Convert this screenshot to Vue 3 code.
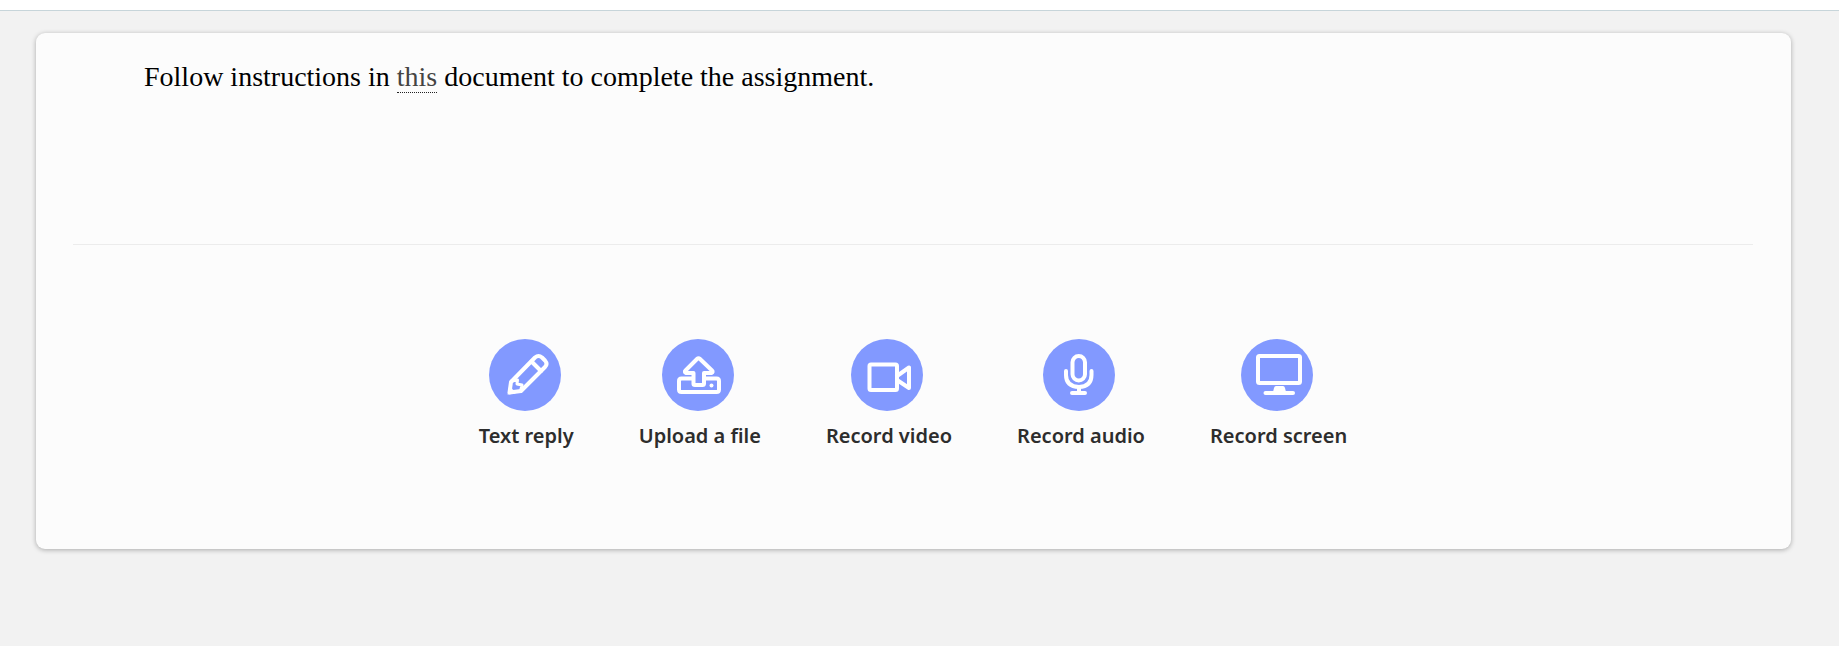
<script setup>
const actions = [
  { id: 'text', label: 'Text reply' },
  { id: 'upload', label: 'Upload a file' },
  { id: 'video', label: 'Record video' },
  { id: 'audio', label: 'Record audio' },
  { id: 'screen', label: 'Record screen' },
]
</script>

<template>
  <div class="page">
    <header class="topbar"></header>
    <main class="card">
      <section class="instructions">
        <p>Follow instructions in <a href="#">this</a> document to complete the assignment.</p>
      </section>
      <section class="actions">
        <button v-for="action in actions" :key="action.id" type="button" class="action">
          <span class="circle">
            <svg viewBox="0 0 72 72" aria-hidden="true">
              <g v-if="action.id === 'text'">
                <path d="M20.500 53.500 L22 43 L46 18.500 Q49.500 15.500 53 18.500 L56 21.500 Q59 25 56 28 L32 52 Z" />
                <path d="M42.500 22.500 L52 32" />
                <path class="thin" d="M22.500 42 L28.500 41 L28 45 L33 46 L31.500 52" />
                <path class="solid" d="M18.500 55.500 L20 48 Q25 50 26.500 54.500 Z" />
              </g>
              <g v-else-if="action.id === 'upload'">
                <path d="M31 39.500 H19.500 Q17 39.500 17 42 V50.500 Q17 53 19.500 53 H54.500 Q57 53 57 50.500 V42 Q57 39.500 54.500 39.500 H43" />
                <path d="M31.500 45 V34 H24 Q22 33 23.500 31.500 L35 20 Q36.500 18.500 38 20 L50 31.500 Q51.500 33 49.500 34 H42 V44.500 Q42 46 40.500 46 H33 Q31.500 46 31.500 45 Z" />
                <circle class="solid" cx="49.500" cy="46.500" r="2" />
              </g>
              <g v-else-if="action.id === 'video'">
                <rect x="18.500" y="25.500" width="27.500" height="25.500" rx="1.500" />
                <path d="M46 37 L58 28.500 V49 L46 41" />
              </g>
              <g v-else-if="action.id === 'audio'">
                <rect x="29.500" y="17" width="12.500" height="24.500" rx="6.250" />
                <path d="M23 32 V36 Q23 47.500 36 48 Q48.500 47.500 48.500 36 V32" />
                <path d="M36 48 V53 M29 54 H42" />
              </g>
              <g v-else>
                <rect x="17" y="17" width="42" height="27" rx="1.500" />
                <path class="solid" d="M35 47 H42 Q43.500 47 44 49 L45 53 H32 L33 49 Q33.500 47 35 47 Z" />
                <path d="M24.500 54 H52" />
              </g>
            </svg>
          </span>
          <span class="label">{{ action.label }}</span>
        </button>
      </section>
    </main>
  </div>
</template>

<style>
body {
  margin: 0;
  background: #f2f2f2;
}
</style>

<style scoped>
.page {
  box-sizing: border-box;
  min-height: 100vh;
  padding-bottom: 48px;
  background: #f2f2f2;
}
.topbar {
  height: 10px;
  background: #fff;
  border-bottom: 1px solid #c7d5da;
}
.card {
  margin: 22px 48px 0 36px;
  padding: 0 38px 0 37px;
  border-radius: 9px;
  background: #fcfcfc;
  box-shadow: 0 1px 5px rgba(0, 0, 0, 0.3);
}
.instructions {
  min-height: 184px;
  padding: 27px 71px 0;
  border-bottom: 1px solid #ececec;
}
.instructions p {
  margin: 0;
  font-family: Georgia, "Liberation Serif", serif;
  font-size: 28px;
  line-height: 34px;
  color: #000;
}
.instructions a {
  color: #444;
  text-decoration: none;
  border-bottom: 1px dotted #222;
}
.actions {
  display: flex;
  flex-wrap: wrap;
  justify-content: center;
  gap: 65px;
  padding: 94px 0 99px;
}
.action {
  display: flex;
  flex-direction: column;
  align-items: center;
  gap: 11px;
  padding: 0;
  border: 0;
  background: none;
  color: #2d2d2d;
  font: 600 20px/28px "Noto Sans", "Open Sans", sans-serif;
  cursor: pointer;
}
.circle {
  width: 72px;
  height: 72px;
  margin-right: 3px;
  border-radius: 50%;
  background: #8299ff;
}
svg {
  display: block;
  width: 100%;
  height: 100%;
  fill: none;
  stroke: #fff;
  stroke-width: 4;
  stroke-linecap: round;
  stroke-linejoin: round;
}
.thin {
  stroke-width: 3;
}
.solid {
  fill: #fff;
  stroke: none;
}
</style>
